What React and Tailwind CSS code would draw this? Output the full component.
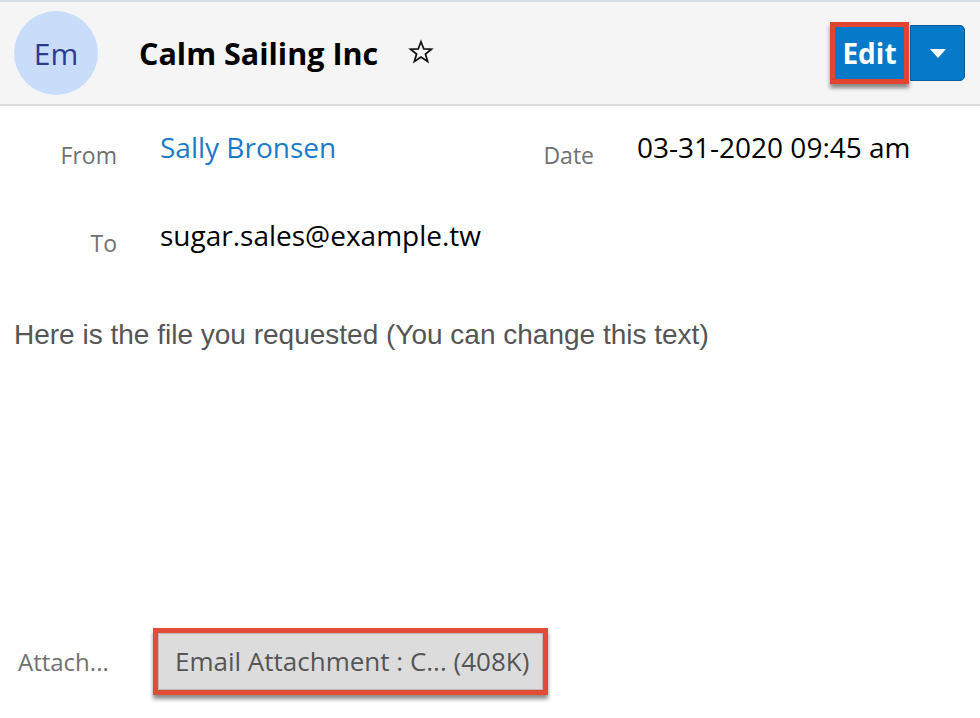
const StarIcon = () => (
  <svg width="26" height="26" viewBox="0 0 24 24" fill="none" stroke="#111" strokeWidth="1.6" strokeLinejoin="miter">
    <polygon points="12,2.5 14.6,9.2 21.6,9.4 16.1,13.8 18.1,20.8 12,16.7 5.9,20.8 7.9,13.8 2.4,9.4 9.4,9.2" />
  </svg>
);

const Caret = () => (
  <svg width="16" height="9" viewBox="0 0 16 9">
    <polygon points="0,0 16,0 8,9" fill="#fff" />
  </svg>
);

export default function App() {
  return (
    <div className="w-[980px] h-[718px] bg-white overflow-hidden font-['Open_Sans',sans-serif] text-black">
      {/* Header */}
      <div className="h-[106px] border-t-2 border-b-2 border-t-[#d8dde2] border-b-[#dcdcdc] bg-[#f5f5f5] flex items-center pl-[14px] pr-[15px]">
        <div className="w-[84px] h-[84px] rounded-full bg-[#c9ddfb] flex items-center justify-center text-[30px] text-[#2b3c8e]">
          Em
        </div>
        <h1 className="ml-[41px] text-[30.5px] font-bold leading-none">Calm Sailing Inc</h1>
        <div className="ml-[30px] mt-[-2px]">
          <StarIcon />
        </div>
        <div className="ml-auto flex items-center">
          <div className="border-[5px] border-[#e0462f] shadow-[0_4px_4px_rgba(0,0,0,0.45)]">
            <button className="w-[69px] h-[52px] bg-[#0679c8] text-white text-[28px] font-bold leading-none flex items-center justify-center">
              Edit
            </button>
          </div>
          <button className="ml-[1px] w-[55px] h-[56px] bg-[#0679c8] border border-[#0b5c9c] rounded-r-[5px] flex items-center justify-center">
            <Caret />
          </button>
        </div>
      </div>

      {/* Fields */}
      <div className="pt-[24px]">
        <div className="flex items-start h-[88px]">
          <div className="w-[117px] text-right text-[23px] leading-[34px] text-[#717171] pt-[8px]">From</div>
          <div className="ml-[43px] w-[274px] text-[28px] leading-[34px] text-[#1b7bc9]">Sally Bronsen</div>
          <div className="w-[160px] text-right text-[23px] leading-[34px] text-[#717171] pt-[8px]">Date</div>
          <div className="ml-[43px] text-[28px] leading-[34px]">03-31-2020 09:45 am</div>
        </div>
        <div className="flex items-start">
          <div className="w-[117px] text-right text-[23px] leading-[34px] text-[#717171] pt-[8px]">To</div>
          <div className="ml-[43px] text-[28px] leading-[34px]">sugar.sales@example.tw</div>
        </div>
      </div>

      {/* Body */}
      <p className="mt-[58px] pl-[14px] font-['Liberation_Sans',Arial,sans-serif] text-[28px] leading-[34px] text-[#555]">
        Here is the file you requested (You can change this text)
      </p>

      {/* Attachments */}
      <div className="mt-[276px] flex items-center">
        <div className="w-[153px] pl-[18px] text-[24px] text-[#717171]">Attach...</div>
        <div className="border-[5px] border-[#e24b35] shadow-[0_4px_4px_rgba(0,0,0,0.45)]">
          <div className="w-[385px] h-[57px] bg-[#dcdcdc] border border-[#b9b9b9] pl-[16px] flex items-center text-[26px] text-[#555]">
            Email Attachment : C... (408K)
          </div>
        </div>
      </div>
    </div>
  );
}
